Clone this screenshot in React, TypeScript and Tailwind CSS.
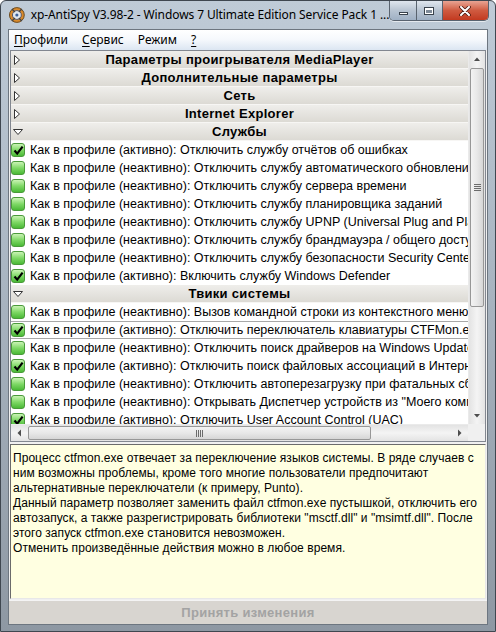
import React from "react";

type Row =
  | { kind: "group"; title: string; open: boolean }
  | { kind: "item"; text: string; checked: boolean; focused?: boolean };

const ROWS: Row[] = [
  { kind: "group", title: "Параметры проигрывателя MediaPlayer", open: false },
  { kind: "group", title: "Дополнительные параметры", open: false },
  { kind: "group", title: "Сеть", open: false },
  { kind: "group", title: "Internet Explorer", open: false },
  { kind: "group", title: "Службы", open: true },
  { kind: "item", checked: true, text: "Как в профиле (активно): Отключить службу отчётов об ошибках" },
  { kind: "item", checked: false, text: "Как в профиле (неактивно): Отключить службу автоматического обновления" },
  { kind: "item", checked: false, text: "Как в профиле (неактивно): Отключить службу сервера времени" },
  { kind: "item", checked: false, text: "Как в профиле (неактивно): Отключить службу планировщика заданий" },
  { kind: "item", checked: false, text: "Как в профиле (неактивно): Отключить службу UPNP (Universal Plug and Play)" },
  { kind: "item", checked: false, text: "Как в профиле (неактивно): Отключить службу брандмауэра / общего доступа к Интернету" },
  { kind: "item", checked: false, text: "Как в профиле (неактивно): Отключить службу безопасности Security Center" },
  { kind: "item", checked: true, text: "Как в профиле (активно): Включить службу Windows Defender" },
  { kind: "group", title: "Твики системы", open: true },
  { kind: "item", checked: false, text: "Как в профиле (неактивно): Вызов командной строки из контекстного меню" },
  { kind: "item", checked: true, focused: true, text: "Как в профиле (активно): Отключить переключатель клавиатуры CTFMon.exe" },
  { kind: "item", checked: false, text: "Как в профиле (неактивно): Отключить поиск драйверов на Windows Update" },
  { kind: "item", checked: true, text: "Как в профиле (активно): Отключить поиск файловых ассоциаций в Интернете" },
  { kind: "item", checked: false, text: "Как в профиле (неактивно): Отключить автоперезагрузку при фатальных сбоях" },
  { kind: "item", checked: false, text: "Как в профиле (неактивно): Открывать Диспетчер устройств из \"Моего компьютера\"" },
  { kind: "item", checked: true, text: "Как в профиле (активно): Отключить User Account Control (UAC)" },
];

const DESCRIPTION = [
  "Процесс ctfmon.exe отвечает за переключение языков системы. В ряде случаев с",
  "ним возможны проблемы, кроме того многие пользователи предпочитают",
  "альтернативные переключатели (к примеру, Punto).",
  "Данный параметр позволяет заменить файл ctfmon.exe пустышкой, отключить его",
  "автозапуск, а также разрегистрировать библиотеки \"msctf.dll\" и \"msimtf.dll\". После",
  "этого запуск ctfmon.exe становится невозможен.",
  "Отменить произведённые действия можно в любое время.",
];

const MENU = [
  { first: "П", rest: "рофили", plain: false },
  { first: "С", rest: "ервис", plain: false },
  { first: "Р", rest: "ежим", plain: true },
  { first: "?", rest: "", plain: false },
];

function AppIcon() {
  return (
    <svg width="18" height="18" viewBox="0 0 18 18">
      <circle cx="9" cy="9" r="7.5" fill="#d98a2b" stroke="#6b4a1f" strokeWidth="1" />
      <circle cx="9" cy="9" r="4.5" fill="#dfe6ee" stroke="#556" strokeWidth="1" />
      <path d="M4 3 L7 6 M14 3 L11 6 M4 15 L7 12 M14 15 L11 12" stroke="#444" strokeWidth="1.4" />
      <circle cx="9" cy="9" r="1.6" fill="#3a5f9a" />
    </svg>
  );
}

function CheckBox({ checked }: { checked: boolean }) {
  return (
    <span className="w-[14px] h-[14px] shrink-0 rounded-[3px] border border-[#4a9a3a] bg-gradient-to-b from-[#c9f3b4] via-[#7fd966] to-[#49b935] flex items-center justify-center">
      {checked && (
        <svg width="11" height="11" viewBox="0 0 11 11">
          <path d="M1.5 5.5 L4.2 8.6 L9.6 1.6" fill="none" stroke="#000" strokeWidth="2.2" />
        </svg>
      )}
    </span>
  );
}

function Triangle({ open }: { open: boolean }) {
  return open ? (
    <svg width="10" height="8" viewBox="0 0 10 8" className="shrink-0">
      <path d="M0.5 1.5 H9.5 L5 6.5 Z" fill="#fff" stroke="#333" strokeWidth="1" />
    </svg>
  ) : (
    <svg width="8" height="10" viewBox="0 0 8 10" className="shrink-0">
      <path d="M1.5 0.5 V9.5 L6.5 5 Z" fill="#fff" stroke="#333" strokeWidth="1" />
    </svg>
  );
}

function ListRow({ row }: { row: Row }) {
  if (row.kind === "group") {
    return (
      <div className="h-[18px] shrink-0 relative flex items-center bg-gradient-to-b from-[#efeeeb] to-[#dcdad4] border-b border-[#f7f6f4]">
        <span className="absolute left-[2px] top-0 h-full flex items-center">
          <Triangle open={row.open} />
        </span>
        <span className="flex-1 text-center font-bold text-[13px] tracking-[0.3px] leading-[18px] text-black">{row.title}</span>
      </div>
    );
  }
  return (
    <div
      className={`h-[18px] shrink-0 flex items-center gap-[5px] pl-0 bg-white ${
        row.focused ? "border-y border-[#a8a8a8]" : ""
      }`}
    >
      <CheckBox checked={row.checked} />
      <span className="whitespace-nowrap text-[12.5px] leading-[18px] text-black">{row.text}</span>
    </div>
  );
}

function ArrowGlyph({ dir }: { dir: "up" | "down" | "left" | "right" }) {
  const d = {
    up: "M1 5 L4 1.5 L7 5 Z",
    down: "M1 2 L4 5.5 L7 2 Z",
    left: "M5 0.5 L1.5 4 L5 7.5 Z",
    right: "M2 0.5 L5.5 4 L2 7.5 Z",
  }[dir];
  const size = dir === "up" || dir === "down" ? { w: 8, h: 7 } : { w: 7, h: 8 };
  return (
    <svg width={size.w} height={size.h} viewBox={`0 0 ${size.w} ${size.h}`}>
      <path d={d} fill="#4d4d4d" />
    </svg>
  );
}

function VScroll() {
  return (
    <div className="w-[17px] shrink-0 flex flex-col bg-gradient-to-r from-[#e3e3e3] via-[#f4f4f4] to-[#e3e3e3] border-l border-[#eaeaea]">
      <div className="h-[17px] flex items-center justify-center">
        <ArrowGlyph dir="up" />
      </div>
      <div className="h-[239px] mx-[1px] rounded-[2px] border border-[#979797] bg-gradient-to-r from-[#f3f3f3] via-[#e8e8e8] to-[#d6d6d6] flex items-center justify-center">
        <div className="flex flex-col gap-[1px]">
          <span className="w-[7px] h-[1px] bg-[#6c6c6c]" />
          <span className="w-[7px] h-[1px] bg-[#6c6c6c]" />
          <span className="w-[7px] h-[1px] bg-[#6c6c6c]" />
          <span className="w-[7px] h-[1px] bg-[#6c6c6c]" />
        </div>
      </div>
      <div className="flex-1" />
      <div className="h-[17px] flex items-center justify-center">
        <ArrowGlyph dir="down" />
      </div>
    </div>
  );
}

function HScroll() {
  return (
    <div className="h-[17px] shrink-0 flex">
      <div className="flex-1 flex bg-gradient-to-b from-[#e3e3e3] via-[#f4f4f4] to-[#e3e3e3] border-t border-[#eaeaea]">
        <div className="w-[17px] flex items-center justify-center">
          <ArrowGlyph dir="left" />
        </div>
        <div className="w-[343px] my-[1px] rounded-[2px] border border-[#979797] bg-gradient-to-b from-[#f3f3f3] via-[#e8e8e8] to-[#d6d6d6] flex items-center justify-center">
          <div className="flex gap-[1px]">
            <span className="w-[1px] h-[7px] bg-[#6c6c6c]" />
            <span className="w-[1px] h-[7px] bg-[#6c6c6c]" />
            <span className="w-[1px] h-[7px] bg-[#6c6c6c]" />
            <span className="w-[1px] h-[7px] bg-[#6c6c6c]" />
          </div>
        </div>
        <div className="flex-1" />
        <div className="w-[17px] flex items-center justify-center">
          <ArrowGlyph dir="right" />
        </div>
      </div>
      <div className="w-[17px] bg-[#f0f0f0]" />
    </div>
  );
}

function CaptionButtons() {
  return (
    <div className="flex h-[20px] mt-[-8px] rounded-b-[5px] border border-[#59636f] border-t-0 overflow-hidden shadow-[0_1px_0_rgba(255,255,255,0.6)]">
      <div className="w-[27px] bg-gradient-to-b from-[#dfe6ee] via-[#b8c4d2] to-[#9fb0c4] border-r border-[#59636f] flex items-center justify-center">
        <span className="w-[9px] h-[3px] bg-white border border-[#39424c] mt-[5px]" />
      </div>
      <div className="w-[26px] bg-gradient-to-b from-[#dfe6ee] via-[#b8c4d2] to-[#9fb0c4] border-r border-[#59636f] flex items-center justify-center">
        <span className="w-[10px] h-[8px] bg-white border border-[#39424c] flex items-center justify-center">
          <span className="w-[6px] h-[3px] mt-[1px] bg-[#7e8a98]" />
        </span>
      </div>
      <div className="w-[46px] bg-gradient-to-b from-[#e8a493] via-[#cf5a40] to-[#c2391f] flex items-center justify-center">
        <svg width="12" height="10" viewBox="0 0 12 10">
          <path d="M2 1 L10 9 M10 1 L2 9" stroke="#4a1a10" strokeWidth="3.6" strokeLinecap="round" />
          <path d="M2 1 L10 9 M10 1 L2 9" stroke="#fff" strokeWidth="2" strokeLinecap="round" />
        </svg>
      </div>
    </div>
  );
}

export default function App() {
  return (
    <div className="w-[496px] h-[632px] flex flex-col overflow-hidden rounded-t-[6px] border border-[#3f4750] bg-gradient-to-b from-[#bfcbd7] via-[#a6b2be] to-[#8e98a3] font-['Liberation_Sans',Arial,sans-serif]">
      {/* Заголовок окна */}
      <div className="h-[28px] shrink-0 flex items-center pl-[7px] pr-[6px]">
        <AppIcon />
        <span className="ml-[5px] flex-1 whitespace-nowrap text-[12px] text-black font-['Noto_Sans',sans-serif] tracking-[-0.1px]">
          xp-AntiSpy V3.98-2 - Windows 7 Ultimate Edition Service Pack 1 ...
        </span>
        <CaptionButtons />
      </div>

      {/* Клиентская область */}
      <div className="flex-1 mx-[7px] flex flex-col border border-[#6d7680] bg-[#f0f0f0]">
        {/* Меню */}
        <div className="h-[20px] shrink-0 flex items-center gap-[14px] pl-[5px] bg-gradient-to-b from-[#ffffff] via-[#f5f8fc] to-[#dce6f2] text-[12px] text-black font-['Noto_Sans',sans-serif]">
          {MENU.map((m) => (
            <span key={m.first} className="whitespace-nowrap">
              <span className={m.plain ? "" : "underline underline-offset-2"}>{m.first}</span>
              {m.rest}
            </span>
          ))}
        </div>

        {/* Список параметров */}
        <div className="h-[392px] shrink-0 mx-[1px] flex flex-col border border-[#828790] bg-white">
          <div className="flex-1 flex min-h-0">
            <div className="flex-1 min-w-0 overflow-hidden flex flex-col">
              {ROWS.map((r, i) => (
                <ListRow key={i} row={r} />
              ))}
            </div>
            <VScroll />
          </div>
          <HScroll />
        </div>

        {/* Описание */}
        <div className="h-[155px] shrink-0 mx-[1px] mt-[2px] border border-t-[#6b6b6b] border-l-[#6b6b6b] border-r-[#e8e8e8] border-b-[#e8e8e8] bg-[#ffffe1] px-[2px] pt-[6px]">
          {DESCRIPTION.map((line, i) => (
            <div key={i} className="whitespace-nowrap text-[12px] leading-[15px] tracking-[0.05px] text-black">
              {line}
            </div>
          ))}
        </div>

        {/* Кнопка */}
        <div className="flex-1 mt-[1px] flex items-center justify-center bg-[#d8d5d0] border-t border-[#f4f4f4]">
          <span className="font-bold text-[13px] tracking-[0.3px] text-[#a3a3a3]">Принять изменения</span>
        </div>
      </div>

      <div className="h-[6px] shrink-0" />
    </div>
  );
}
